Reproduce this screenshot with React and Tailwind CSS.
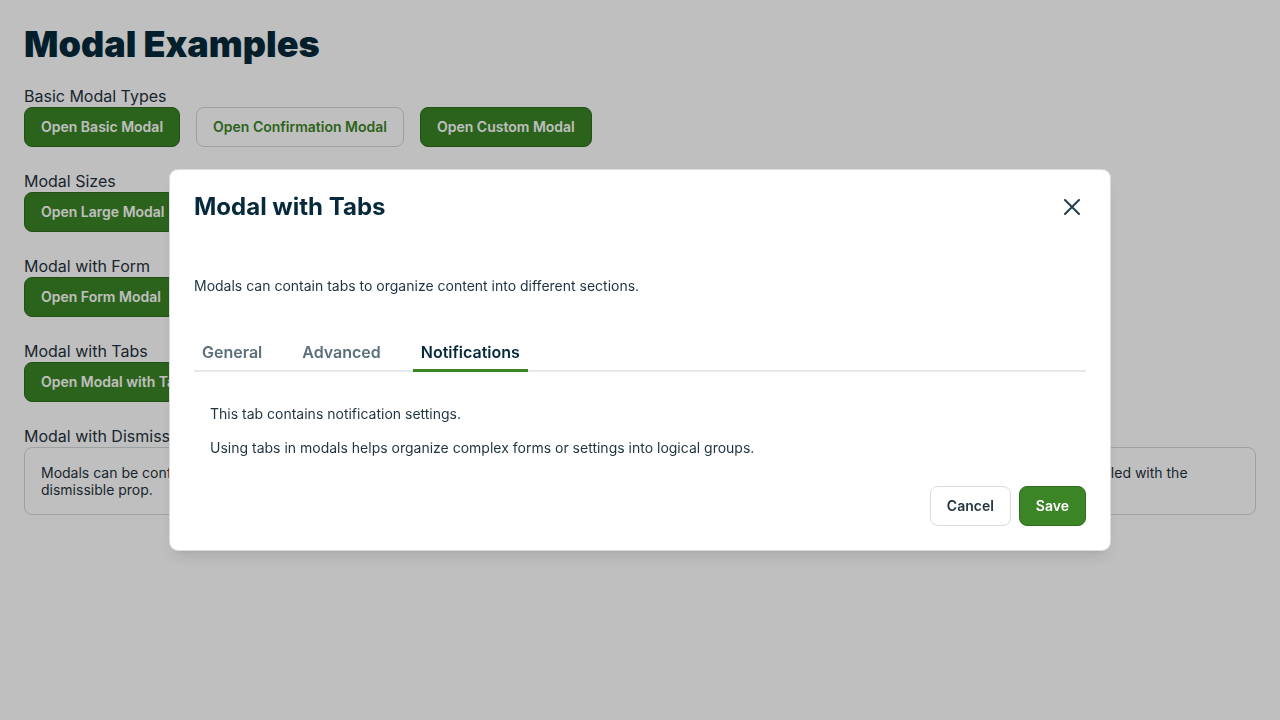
import React, { useState } from 'react';

const font = { fontFamily: 'Inter, "Noto Sans", sans-serif' };

const PrimaryButton = ({ children }) => (
  <button className="h-10 px-4 rounded-lg border border-[#2f6d1c] bg-[#3b8526] text-sm font-semibold text-white">
    {children}
  </button>
);

const OutlineButton = ({ children }) => (
  <button className="h-10 px-4 rounded-lg border border-[#d4d8da] bg-white text-sm font-semibold text-[#3b8526]">
    {children}
  </button>
);

const Section = ({ label, children }) => (
  <div className="mt-[22px] first:mt-0">
    <p className="text-base leading-6 text-[#1f3340]">{label}</p>
    <div className="mt-[-1px]">{children}</div>
  </div>
);

const tabs = ['General', 'Advanced', 'Notifications'];

const App = () => {
  const [active, setActive] = useState('Notifications');

  return (
    <div className="min-h-screen bg-white px-6 pt-[22px]" style={font}>
      <h1 className="text-4xl font-black text-[#062a3b] leading-[44px]">Modal Examples</h1>

      <div className="mt-[18px]">
        <Section label="Basic Modal Types">
          <div className="flex gap-4">
            <PrimaryButton>Open Basic Modal</PrimaryButton>
            <OutlineButton>Open Confirmation Modal</OutlineButton>
            <PrimaryButton>Open Custom Modal</PrimaryButton>
          </div>
        </Section>
        <Section label="Modal Sizes">
          <div className="flex gap-4">
            <PrimaryButton>Open Large Modal</PrimaryButton>
            <PrimaryButton>Open Small Modal</PrimaryButton>
          </div>
        </Section>
        <Section label="Modal with Form">
          <PrimaryButton>Open Form Modal</PrimaryButton>
        </Section>
        <Section label="Modal with Tabs">
          <PrimaryButton>Open Modal with Tabs</PrimaryButton>
        </Section>
        <Section label="Modal with Dismissible">
          <div className="mt-[-1px] rounded-lg border border-[#d4d8da] px-4 py-4 text-sm leading-[17px] text-[#1f3340]">
            Modals can be configured to prevent closing when clicking outside the modal, pressing the Escape key, or clicking the close
            button. This behaviour is fully controlled with the dismissible prop.
          </div>
        </Section>
      </div>

      {/* overlay + modal */}
      <div className="fixed inset-0 bg-black/25 flex items-center justify-center">
        <div className="w-[940px] rounded-lg ring-1 ring-[#d9dde0] bg-white shadow-lg">
          <div className="flex items-center justify-between px-6 pt-[21px]">
            <h2 className="text-2xl font-bold leading-8 text-[#062a3b]">Modal with Tabs</h2>
            <button className="mr-[6px] text-[#23404f]">
              <svg width="16" height="16" viewBox="0 0 16 16" fill="none" stroke="currentColor" strokeWidth="2" strokeLinecap="round">
                <path d="M1 1L15 15M15 1L1 15" />
              </svg>
            </button>
          </div>

          <div className="px-6 pt-[53px]">
            <p className="text-sm leading-5 text-[#1f3340]">Modals can contain tabs to organize content into different sections.</p>

            <div className="mt-[44px] flex gap-6 border-b-2 border-[#e6e9eb]">
              {tabs.map((t) => (
                <button
                  key={t}
                  onClick={() => setActive(t)}
                  className={`px-2 pb-[5px] mb-[-2px] text-base font-semibold leading-6 border-b-[3px] ${
                    active === t ? 'text-[#062a3b] border-[#3b8526]' : 'text-[#5b707b] border-transparent'
                  }`}
                >
                  {t}
                </button>
              ))}
            </div>

            <div className="px-4 pt-8 text-sm leading-5 text-[#1f3340]">
              <p>This tab contains notification settings.</p>
              <p className="mt-[14px]">Using tabs in modals helps organize complex forms or settings into logical groups.</p>
            </div>
          </div>

          <div className="flex justify-end gap-2 px-6 pt-7 pb-6">
            <button className="h-10 px-4 rounded-lg border border-[#d9dde0] bg-white text-sm font-semibold text-[#1f3340]">
              Cancel
            </button>
            <button className="h-10 px-4 rounded-lg border border-[#2f6d1c] bg-[#3b8526] text-sm font-semibold text-white">
              Save
            </button>
          </div>
        </div>
      </div>
    </div>
  );
};

export default App;
